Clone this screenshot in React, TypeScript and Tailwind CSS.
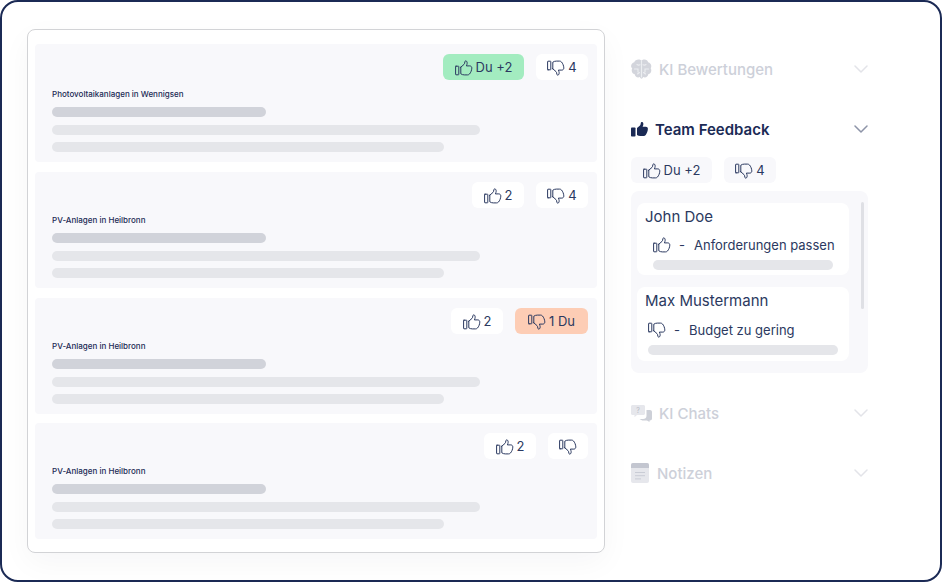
import React from "react";

function Thumb({ down = false }: { down?: boolean }) {
  return (
    <svg
      width="18"
      height="16"
      viewBox="0 0 18 16"
      fill="none"
      stroke="currentColor"
      strokeWidth="1"
      strokeLinejoin="round"
      strokeLinecap="round"
      className={down ? "shrink-0 [transform:scaleY(-1)]" : "shrink-0"}
    >
      <rect x="0.6" y="6.2" width="3.2" height="8.6" rx="0.4" />
      <path d="M5.800 7.200 9 4.400c.6-.6.800-1.500.8-2.500 0-.9 1-1.300 1.700-.7.800.8.800 2.200.4 3.300l-.5 1.400h3.400c1.200 0 2.100 1 2 2.200-.1 2.200-1 4.400-2.300 5.900-.5.600-1.200.9-2 .9H9.300c-1.300 0-2.500-.4-3.500-1.100V7.200Z" />
    </svg>
  );
}

function Pill({
  children,
  down = false,
  className = "",
}: {
  children?: React.ReactNode;
  down?: boolean;
  className?: string;
}) {
  return (
    <div
      className={`flex h-[26px] items-center justify-center gap-[3px] rounded-[6px] pt-px text-[13px] leading-none text-[#2b3960] ${className}`}
    >
      <Thumb down={down} />
      {children}
    </div>
  );
}

function Bars() {
  return (
    <div className="mt-[7px] flex flex-col">
      <div className="h-[10px] w-[214px] rounded-full bg-[#d1d3da]" />
      <div className="mt-[8px] h-[10px] w-[428px] rounded-full bg-[#e5e6ea]" />
      <div className="mt-[7px] h-[10px] w-[392px] rounded-full bg-[#e5e6ea]" />
    </div>
  );
}

function Card({
  title,
  pills,
  first = false,
  className = "",
}: {
  title: string;
  pills: React.ReactNode;
  first?: boolean;
  className?: string;
}) {
  return (
    <div className={`rounded-[4px] bg-[#f8f8fb] pl-[17px] pr-[9px] pt-[10px] ${className}`}>
      <div className="flex justify-end gap-[12px]">{pills}</div>
      <div
        className={`${first ? "mt-[8px]" : "mt-[6px]"} h-[12px] text-[8px] font-medium leading-[12px] text-[#1b2a55]`}
      >
        {title}
      </div>
      <Bars />
    </div>
  );
}

function BrainIcon() {
  return (
    <svg width="21" height="21" viewBox="0 0 21 21" className="shrink-0">
      <path
        d="M7.500.5c1.300 0 2.300.5 3 1.300C11.200 1 12.200.5 13.500.5c1.800 0 3.200 1.100 3.600 2.700 1.900.4 3.200 2 3.200 3.900 0 .8-.2 1.500-.6 2.100.4.600.6 1.400.6 2.200 0 1.900-1.200 3.400-3 3.900-.3 1.900-1.700 3.200-3.500 3.200-.6 0-1.200-.2-1.700-.5-.4 1.200-1 1.700-1.600 1.700s-1.200-.5-1.600-1.700c-.5.300-1.100.5-1.700.5-1.800 0-3.200-1.300-3.500-3.200-1.800-.5-3-2-3-3.900 0-.8.200-1.600.6-2.200C.3 8.600.1 7.900.1 7.100c0-1.900 1.300-3.500 3.200-3.900C3.700 1.600 5.700.500 7.500.500Z"
        fill="#d3d5dc"
      />
      <path
        d="M10.500 2v16M6 5.500c1 .8 2 .8 3 .3M15 5.500c-1 .8-2 .8-3 .3M3.500 10h3.500v3M17.500 10H14v3M6.500 15l2-1.500M14.500 15l-2-1.500"
        fill="none"
        stroke="#eceef1"
        strokeWidth="1.100"
        strokeLinecap="round"
      />
    </svg>
  );
}

function SolidThumb() {
  return (
    <svg width="17" height="15" viewBox="0 0 17 15" className="shrink-0" fill="#1b2a55">
      <rect x="0" y="5.500" width="4.500" height="9" rx="0.800" />
      <path d="M6 6 9 3.400c.6-.6.800-1.400.8-2.300 0-.9 1.100-1.400 1.900-.8.800.8.800 2.100.4 3.100l-.5 1.300h3.300c1.200 0 2.100 1 2 2.100-.1 2.200-.9 4.600-2.200 6.200-.5.700-1.200 1-2 1H9.400c-1.300 0-2.500-.4-3.400-1V6Z" />
    </svg>
  );
}

function ChatsIcon() {
  return (
    <svg width="21" height="17" viewBox="0 0 21 17" className="shrink-0">
      <path d="M1.500 0h11c.8 0 1.500.7 1.500 1.500v7c0 .8-.7 1.500-1.500 1.500H6l-2.500 2.200V10h-2C.7 10 0 9.300 0 8.500v-7C0 .7.700 0 1.500 0Z" fill="#e6e7ec" />
      <path d="M15.500 5H19c1.100 0 2 .9 2 2v6.500c0 1.100-.9 2-2 2h-.5V17l-2.500-1.500h-3.500c-1.500 0-3-.6-4-1.500h3.500c2 0 3.500-1.300 3.500-3V5Z" fill="#cdd0d8" />
      <text x="7" y="7.500" textAnchor="middle" fontSize="7" fill="#b9bcc6" fontFamily="Inter">?</text>
    </svg>
  );
}

function NotesIcon() {
  return (
    <svg width="18" height="20" viewBox="0 0 18 20" className="shrink-0">
      <rect width="18" height="20" rx="2" fill="#e6e7ec" />
      <path d="M2 0h14a2 2 0 0 1 2 2v3H0V2a2 2 0 0 1 2-2Z" fill="#c3c6d0" />
      <path d="M4 9.500h10M4 12.700h10M4 15.900h6" stroke="#c9ccd5" strokeWidth="1" />
    </svg>
  );
}

function Chevron({ active = false }: { active?: boolean }) {
  return (
    <svg
      width="14"
      height="8"
      viewBox="0 0 14 8"
      fill="none"
      stroke="currentColor"
      strokeWidth="1.500"
      strokeLinecap="round"
      strokeLinejoin="round"
      className={active ? "shrink-0 text-[#8d94a8]" : "shrink-0 text-[#e3e4e9]"}
    >
      <path d="M1 1l6 6 6-6" />
    </svg>
  );
}

function Header({
  icon,
  label,
  active = false,
  gap,
  className = "",
}: {
  icon: React.ReactNode;
  label: string;
  active?: boolean;
  gap: string;
  className?: string;
}) {
  return (
    <div className={`flex h-[20px] items-center ${className}`}>
      <div className={`flex flex-1 items-center ${gap}`}>
        {icon}
        <span
          className={
            active
              ? "text-[15px] font-semibold leading-none text-[#1b2a55]"
              : "text-[15px] font-medium leading-none text-[#cdd0d9]"
          }
        >
          {label}
        </span>
      </div>
      <Chevron active={active} />
    </div>
  );
}

export default function App() {
  return (
    <div
      className="h-[583px] w-[942px] overflow-hidden bg-white"
      style={{ fontFamily: "Inter, 'Liberation Sans', sans-serif" }}
    >
      <div className="flex h-[582px] w-[942px] items-start rounded-[18px] border-2 border-[#1b2a55] pl-[25px] pt-[27px]">
        <div className="flex h-[524px] w-[578px] flex-col gap-[10px] rounded-[8px] border border-[#d2d3d6] bg-white px-[7px] pt-[14px] shadow-[0_10px_30px_rgba(20,30,60,0.04)]">
          <Card
            first
            title="Photovoltaikanlagen in Wennigsen"
            className="h-[118px]"
            pills={
              <>
                <Pill className="w-[81px] bg-[#a3ecc0]">Du +2</Pill>
                <Pill down className="w-[52px] bg-white">4</Pill>
              </>
            }
          />
          <Card
            title="PV-Anlagen in Heilbronn"
            className="h-[116px]"
            pills={
              <>
                <Pill className="w-[52px] bg-white">2</Pill>
                <Pill down className="w-[52px] bg-white">4</Pill>
              </>
            }
          />
          <Card
            title="PV-Anlagen in Heilbronn"
            className="h-[116px]"
            pills={
              <>
                <Pill className="w-[52px] bg-white">2</Pill>
                <Pill down className="w-[73px] bg-[#fdcdb5]">1 Du</Pill>
              </>
            }
          />
          <Card
            title="PV-Anlagen in Heilbronn"
            className="-mt-[1px] h-[116px]"
            pills={
              <>
                <Pill className="w-[52px] bg-white">2</Pill>
                <Pill down className="w-[40px] bg-white" />
              </>
            }
          />
        </div>

        <div className="ml-[26px] mt-[30px] flex w-[237px] flex-col">
          <Header gap="gap-[7px]" label="KI Bewertungen" icon={<BrainIcon />} />
          <Header
            active
            gap="gap-[7px]"
            label="Team Feedback"
            className="mt-[40px]"
            icon={<SolidThumb />}
          />
          <div className="mt-[18px] flex gap-[12px]">
            <Pill className="w-[81px] bg-[#f8f8fb]">Du +2</Pill>
            <Pill down className="w-[52px] bg-[#f8f8fb]">4</Pill>
          </div>

          <div className="relative mt-[8px] h-[182px] rounded-[8px] bg-[#f8f8fb] pl-[6px] pr-[19px] pt-[12px]">
            <div className="h-[72px] rounded-[8px] bg-white pl-[8px] pt-[4px]">
              <div className="text-[15px] leading-[20px] text-[#2b3960]">John Doe</div>
              <div className="mt-[9px] flex h-[18px] items-center pl-[8px] text-[13px] leading-none text-[#2b3960]">
                <Thumb />
                <span className="ml-[8px]">-</span>
                <span className="ml-[9px]">Anforderungen passen</span>
              </div>
              <div className="ml-[8px] mt-[6px] h-[10px] w-[180px] rounded-full bg-[#e5e6ea]" />
            </div>
            <div className="mt-[12px] h-[74px] rounded-[8px] bg-white pl-[8px] pt-[4px]">
              <div className="text-[15px] leading-[20px] text-[#2b3960]">Max Mustermann</div>
              <div className="mt-[10px] flex h-[18px] items-center pl-[3px] text-[13px] leading-none text-[#2b3960]">
                <Thumb down />
                <span className="ml-[8px]">-</span>
                <span className="ml-[9px]">Budget zu gering</span>
              </div>
              <div className="ml-[3px] mt-[6px] h-[10px] w-[190px] rounded-full bg-[#e5e6ea]" />
            </div>
            <div className="absolute right-[4px] top-[11px] h-[107px] w-[3px] rounded-full bg-[#dfe0e5]" />
          </div>

          <Header gap="gap-[7px]" label="KI Chats" className="mt-[30px]" icon={<ChatsIcon />} />
          <Header gap="gap-[8px]" label="Notizen" className="mt-[40px]" icon={<NotesIcon />} />
        </div>
      </div>
    </div>
  );
}
